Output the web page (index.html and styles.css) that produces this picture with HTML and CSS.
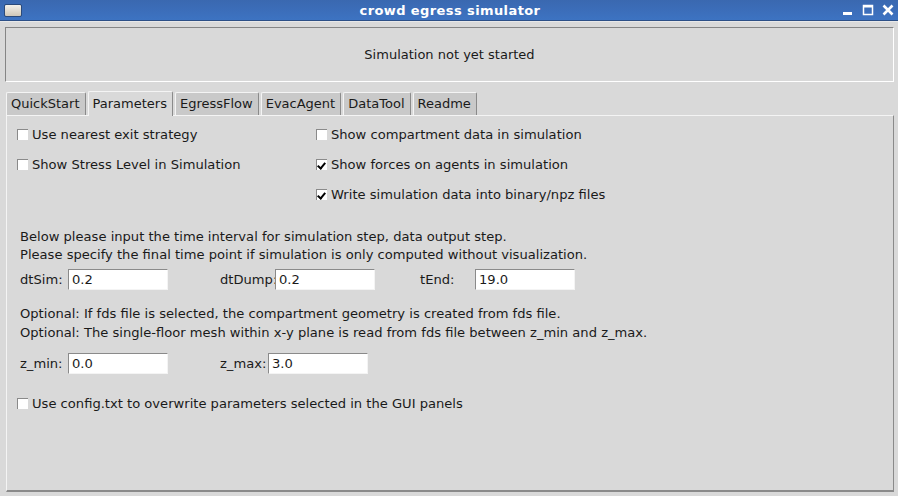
FILE: index.html
```html
<!DOCTYPE html>
<html>
<head>
<meta charset="utf-8">
<link rel="stylesheet" href="styles.css">
</head>
<body>
<div class="titlebar">
  <div class="appicon"></div>
  <div class="title">crowd egress simulator</div>
  <div class="winbtns">
    <svg class="wb" width="14" height="14" viewBox="0 0 14 14"><rect x="2" y="9" width="9" height="3" fill="#fff"/></svg>
    <svg class="wb" width="14" height="14" viewBox="0 0 14 14"><rect x="2.5" y="2.5" width="9" height="9" fill="none" stroke="#fff" stroke-width="1.5"/><rect x="2" y="2" width="10" height="2.5" fill="#fff"/></svg>
    <svg class="wb" width="14" height="14" viewBox="0 0 14 14"><path d="M2.5 2.5 L11.5 11.5 M11.5 2.5 L2.5 11.5" stroke="#fff" stroke-width="2.6"/></svg>
  </div>
</div>
<div class="main">
  <div class="status">Simulation not yet started</div>
  <div class="tabs">
    <div class="tab">QuickStart</div>
    <div class="tab active">Parameters</div>
    <div class="tab">EgressFlow</div>
    <div class="tab">EvacAgent</div>
    <div class="tab">DataTool</div>
    <div class="tab">Readme</div>
  </div>
  <div class="panel">
    <div class="checks">
      <div class="col col1">
        <label class="cb"><span class="box"></span>Use nearest exit strategy</label>
        <label class="cb"><span class="box"></span>Show Stress Level in Simulation</label>
      </div>
      <div class="col">
        <label class="cb"><span class="box"></span>Show compartment data in simulation</label>
        <label class="cb"><span class="box checked"></span>Show forces on agents in simulation</label>
        <label class="cb"><span class="box checked"></span>Write simulation data into binary/npz files</label>
      </div>
    </div>
    <div class="para p1">Below please input the time interval for simulation step, data output step.<br>Please specify the final time point if simulation is only computed without visualization.</div>
    <div class="row r1">
      <div class="field"><span class="lbl w48">dtSim:</span><span class="entry">0.2</span></div>
      <div class="field"><span class="lbl w55">dtDump:</span><span class="entry">0.2</span></div>
      <div class="field"><span class="lbl w55">tEnd:</span><span class="entry">19.0</span></div>
    </div>
    <div class="para p2">Optional: If fds file is selected, the compartment geometry is created from fds file.<br>Optional: The single-floor mesh within x-y plane is read from fds file between z_min and z_max.</div>
    <div class="row r2">
      <div class="field"><span class="lbl w48">z_min:</span><span class="entry">0.0</span></div>
      <div class="field"><span class="lbl w48">z_max:</span><span class="entry">3.0</span></div>
    </div>
    <label class="cb cfg"><span class="box"></span>Use config.txt to overwrite parameters selected in the GUI panels</label>
  </div>
</div>
</body>
</html>
```

FILE: styles.css
```css
html, body {
  margin: 0;
  padding: 0;
  width: 898px;
  height: 496px;
  overflow: hidden;
  background: #d9d9d9;
  font-family: "DejaVu Sans", sans-serif;
  font-size: 13px;
  color: #1a1a1a;
}
.titlebar {
  height: 20px;
  background: linear-gradient(#3a68b0, #3d73c2);
  border-bottom: 1px solid #2c4f86;
  display: flex;
  align-items: center;
  position: relative;
}
.appicon {
  width: 16px;
  height: 11px;
  margin-left: 4px;
  border-radius: 2px;
  background: linear-gradient(#f4f1ea, #cfc7b8);
  border: 1px solid #2b4a7a;
}
.title {
  position: absolute;
  left: 0;
  right: 0;
  text-align: center;
  color: #fff;
  font-weight: bold;
  font-size: 13px;
  letter-spacing: 0.4px;
  padding-left: 2px;
}
.winbtns {
  margin-left: auto;
  display: flex;
  gap: 6px;
  padding-right: 3px;
}
.main {
  padding: 5px 4px 0 5px;
  border-top: 1px solid #e8e8e8;
}
.status {
  height: 53px;
  border-top: 1px solid #858585;
  border-left: 1px solid #858585;
  border-bottom: 1px solid #fff;
  border-right: 1px solid #fff;
  display: flex;
  align-items: center;
  justify-content: center;
  font-size: 13px;
}
.tabs {
  display: flex;
  margin-top: 8px;
  padding-left: 1px;
  gap: 2px;
  height: 25px;
  align-items: flex-end;
}
.tab {
  height: 22px;
  line-height: 22px;
  padding: 0 5px 0 4px;
  background: #c9c9c9;
  border-top: 1px solid #f4f4f4;
  border-left: 1px solid #f4f4f4;
  border-right: 1px solid #8a8a8a;
  border-radius: 2px 2px 0 0;
  font-size: 13px;
}
.tab.active {
  background: #d9d9d9;
  height: 24px;
  line-height: 24px;
  margin-bottom: -1px;
  position: relative;
  z-index: 1;
}
.panel {
  height: 374px;
  margin-left: 1px;
  border-top: 1px solid #f4f4f4;
  border-left: 1px solid #f4f4f4;
  border-right: 1px solid #8a8a8a;
  border-bottom: 2px solid #8a8a8a;
  padding: 0 0 0 10px;
  display: flex;
  flex-direction: column;
  font-size: 13.1px;
}
.checks {
  display: flex;
  padding-top: 3px;
}
.col {
  display: flex;
  flex-direction: column;
}
.col1 {
  width: 299px;
}
.cb {
  display: flex;
  align-items: center;
  height: 30px;
}
.box {
  width: 10px;
  height: 10px;
  background: #fff;
  border-top: 1px solid #8a8a8a;
  border-left: 1px solid #8a8a8a;
  margin-right: 4px;
  position: relative;
}
.box.checked::after {
  content: "";
  position: absolute;
  left: 2px;
  top: 1px;
  width: 3px;
  height: 6px;
  border-right: 2px solid #000;
  border-bottom: 2px solid #000;
  transform: rotate(40deg);
}
.para {
  padding-left: 3px;
  line-height: 18px;
}
.p1 {
  margin-top: 19px;
}
.row {
  display: grid;
  grid-template-columns: repeat(3, 200px);
  padding-left: 3px;
}
.field {
  display: flex;
  align-items: center;
}
.r1 {
  margin-top: 5px;
}
.lbl {
  display: inline-block;
}
.w48 { width: 48px; }
.w55 { width: 55px; }
.entry {
  width: 95px;
  height: 19px;
  line-height: 19px;
  background: #fff;
  border-top: 1px solid #8a8a8a;
  border-left: 1px solid #8a8a8a;
  border-bottom: 1px solid #f4f4f4;
  border-right: 1px solid #f4f4f4;
  padding-left: 3px;
}
.p2 {
  margin-top: 14px;
  line-height: 19px;
}
.r2 {
  margin-top: 11px;
}
.cfg {
  margin-top: 14px;
}
```
